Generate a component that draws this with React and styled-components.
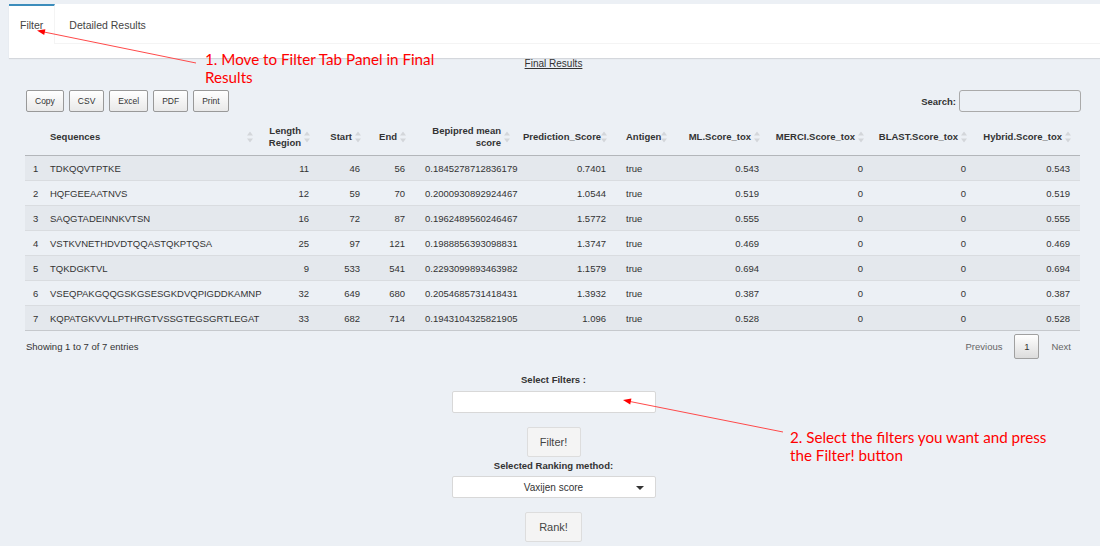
import React from 'react'
import styled, { createGlobalStyle } from 'styled-components'

const Global = createGlobalStyle`
  html, body {
    margin: 0;
    padding: 0;
    background: #ecf0f5;
    font-family: "Liberation Sans", Arial, sans-serif;
    color: #333;
  }
`

const Page = styled.div`
  position: relative;
  width: 1100px;
  height: 546px;
  overflow: hidden;
  background: #ecf0f5;
  padding-top: 4px;
  box-sizing: border-box;
`

const TabBox = styled.div`
  margin-left: 9px;
  height: 54px;
  background: #fff;
  box-shadow: 0 1px 1px rgba(0, 0, 0, 0.1);
`

const TabNav = styled.div`
  display: flex;
  height: 40px;
  border-bottom: 1px solid #f4f4f4;
  box-sizing: border-box;
`

const Tab = styled.div`
  display: flex;
  align-items: center;
  font-size: 10.5px;
  color: #444;
  box-sizing: border-box;
  border-top: 2px solid ${p => (p.$active ? '#3c8dbc' : 'transparent')};
  border-right: ${p => (p.$active ? '1px solid #f4f4f4' : 'none')};
  margin-bottom: ${p => (p.$active ? '-1px' : '0')};
  background: #fff;
  padding: 0 11px 0 ${p => (p.$active ? '11px' : '14px')};
`

const Content = styled.div`
  padding: 0 20px 0 25px;
`

const Title = styled.div`
  text-align: center;
  font-size: 10px;
  line-height: 12px;
  text-decoration: underline;
  color: #333;
  padding-left: 2px;
`

const Toolbar = styled.div`
  display: flex;
  align-items: center;
  justify-content: space-between;
  margin-top: 20px;
  margin-left: 1px;
`

const ButtonGroup = styled.div`
  display: flex;
  gap: 5px;
`

const ExportButton = styled.button`
  height: 22px;
  padding: 0 8px;
  font-family: inherit;
  font-size: 8.5px;
  color: #333;
  background: linear-gradient(to bottom, #fff 0%, #e9e9e9 100%);
  border: 1px solid #999;
  border-radius: 2px;
  box-sizing: border-box;
`

const SearchLabel = styled.label`
  display: flex;
  align-items: center;
  gap: 3px;
  font-size: 9.5px;
  font-weight: bold;
  margin-right: -1px;
`

const SearchInput = styled.input`
  width: 122px;
  height: 22px;
  box-sizing: border-box;
  border: 1px solid #aaa;
  border-radius: 3px;
  background: transparent;
`

const Table = styled.table`
  margin-top: 6px;
  width: 1055px;
  table-layout: fixed;
  border-collapse: collapse;
  font-size: 9.5px;
  border-bottom: 1px solid #c6c9cd;
`

const Th = styled.th`
  position: relative;
  height: 37px;
  padding: 0 ${p => (p.$right ? '18px' : '18px')} 0 ${p => (p.$right ? '4px' : '10px')};
  text-align: ${p => (p.$right ? 'right' : 'left')};
  font-weight: bold;
  line-height: 12px;
  vertical-align: middle;
  border-bottom: 1px solid #b3b6ba;
  color: #333;
`

const Td = styled.td`
  height: 24px;
  padding: 0 ${p => (p.$index ? '0' : '10px')} 0 ${p => (p.$index ? '8px' : '10px')};
  text-align: ${p => (p.$right ? 'right' : 'left')};
  white-space: nowrap;
  overflow: hidden;
  border-top: 1px solid #d9dce0;
  color: #333;
`

const Tr = styled.tr`
  background: ${p => (p.$odd ? '#e4e8ed' : 'transparent')};
`

const SortWrap = styled.span`
  position: absolute;
  right: 9px;
  top: 50%;
  transform: translateY(-50%);
  display: flex;
`

const Footer = styled.div`
  display: flex;
  align-items: center;
  justify-content: space-between;
  margin-top: 3px;
  height: 25px;
  font-size: 9.5px;
  margin-left: 1px;
`

const Pager = styled.div`
  display: flex;
  align-items: center;
  gap: 12px;
  color: #666;
  margin-right: 9px;
`

const PageBtn = styled.span`
  width: 25px;
  height: 25px;
  display: flex;
  align-items: center;
  justify-content: center;
  color: #333;
  border: 1px solid #a0a0a0;
  border-radius: 2px;
  box-sizing: border-box;
  background: linear-gradient(to bottom, #fff 0%, #dcdcdc 100%);
`

const Form = styled.div`
  display: flex;
  flex-direction: column;
  align-items: center;
  margin-top: 15px;
  padding-left: 2px;
`

const FieldLabel = styled.div`
  font-size: 9.5px;
  font-weight: bold;
  line-height: 11px;
  margin-top: ${p => p.$mt || 0}px;
  color: #333;
`

const Field = styled.div`
  position: relative;
  width: 204px;
  height: 22px;
  margin-top: ${p => p.$mt || 0}px;
  box-sizing: border-box;
  background: #fff;
  border: 1px solid #d8d8d8;
  border-radius: 2px;
  display: flex;
  align-items: center;
  justify-content: center;
  font-size: 10px;
  color: #333;
`

const Caret = styled.span`
  position: absolute;
  right: 11px;
  top: 9px;
  width: 0;
  height: 0;
  border-left: 4px solid transparent;
  border-right: 4px solid transparent;
  border-top: 4px solid #333;
`

const ActionButton = styled.button`
  width: ${p => p.$w}px;
  height: 30px;
  margin-top: ${p => p.$mt}px;
  font-family: inherit;
  font-size: 11px;
  color: #444;
  background: #f4f4f4;
  border: 1px solid #ddd;
  border-radius: 2px;
  box-sizing: border-box;
`

const Note = styled.div`
  position: absolute;
  left: ${p => p.$x}px;
  top: ${p => p.$y}px;
  font-family: Lato, "Open Sans", sans-serif;
  font-size: 15.2px;
  line-height: 18px;
  color: #ff0000;
  width: ${p => p.$w}px;
`

const Overlay = styled.svg`
  position: absolute;
  left: 0;
  top: 0;
  pointer-events: none;
`

const SortIcon = () => (
  <SortWrap>
    <svg width="6" height="11" viewBox="0 0 6 11">
      <polygon points="3,0 6,4 0,4" fill="#d3d6da" />
      <polygon points="0,7 6,7 3,11" fill="#d3d6da" />
    </svg>
  </SortWrap>
)

const columns = [
  { w: 15, label: '' },
  { w: 222, label: 'Sequences' },
  { w: 57, label: ['Length', 'Region'], right: true },
  { w: 51, label: 'Start', right: true },
  { w: 45, label: 'End', right: true },
  { w: 104, label: ['Bepipred mean', 'score'], right: true },
  { w: 97, label: 'Prediction_Score', right: true },
  { w: 60, label: 'Antigen' },
  { w: 93, label: 'ML.Score_tox', right: true },
  { w: 104, label: 'MERCI.Score_tox', right: true },
  { w: 103, label: 'BLAST.Score_tox', right: true },
  { w: 104, label: 'Hybrid.Score_tox', right: true },
]

const rows = [
  ['TDKQQVTPTKE', 11, 46, 56, '0.1845278712836179', '0.7401', 'true', '0.543', 0, 0, '0.543'],
  ['HQFGEEAATNVS', 12, 59, 70, '0.2000930892924467', '1.0544', 'true', '0.519', 0, 0, '0.519'],
  ['SAQGTADEINNKVTSN', 16, 72, 87, '0.1962489560246467', '1.5772', 'true', '0.555', 0, 0, '0.555'],
  ['VSTKVNETHDVDTQQASTQKPTQSA', 25, 97, 121, '0.1988856393098831', '1.3747', 'true', '0.469', 0, 0, '0.469'],
  ['TQKDGKTVL', 9, 533, 541, '0.2293099893463982', '1.1579', 'true', '0.694', 0, 0, '0.694'],
  ['VSEQPAKGQQGSKGSESGKDVQPIGDDKAMNP', 32, 649, 680, '0.2054685731418431', '1.3932', 'true', '0.387', 0, 0, '0.387'],
  ['KQPATGKVVLLPTHRGTVSSGTEGSGRTLEGAT', 33, 682, 714, '0.1943104325821905', '1.096', 'true', '0.528', 0, 0, '0.528'],
]

export default function App() {
  return (
    <Page>
      <Global />
      <TabBox>
        <TabNav>
          <Tab $active>Filter</Tab>
          <Tab>Detailed Results</Tab>
        </TabNav>
      </TabBox>

      <Content>
        <Title>Final Results</Title>

        <Toolbar>
          <ButtonGroup>
            {['Copy', 'CSV', 'Excel', 'PDF', 'Print'].map(b => (
              <ExportButton key={b}>{b}</ExportButton>
            ))}
          </ButtonGroup>
          <SearchLabel>
            Search:
            <SearchInput />
          </SearchLabel>
        </Toolbar>

        <Table>
          <colgroup>
            {columns.map((c, i) => (
              <col key={i} style={{ width: c.w }} />
            ))}
          </colgroup>
          <thead>
            <tr>
              {columns.map((c, i) => (
                <Th key={i} $right={c.right}>
                  {Array.isArray(c.label) ? (
                    <>
                      {c.label[0]}
                      <br />
                      {c.label[1]}
                    </>
                  ) : (
                    c.label
                  )}
                  {i > 0 && <SortIcon />}
                </Th>
              ))}
            </tr>
          </thead>
          <tbody>
            {rows.map((r, i) => (
              <Tr key={i} $odd={i % 2 === 0}>
                <Td $index>{i + 1}</Td>
                {r.map((v, j) => (
                  <Td key={j} $right={columns[j + 1].right}>
                    {v}
                  </Td>
                ))}
              </Tr>
            ))}
          </tbody>
        </Table>

        <Footer>
          <span>Showing 1 to 7 of 7 entries</span>
          <Pager>
            <span>Previous</span>
            <PageBtn>1</PageBtn>
            <span>Next</span>
          </Pager>
        </Footer>

        <Form>
          <FieldLabel>Select Filters :</FieldLabel>
          <Field $mt={6} />
          <ActionButton $w={54} $mt={14}>Filter!</ActionButton>
          <FieldLabel $mt={3}>Selected Ranking method:</FieldLabel>
          <Field $mt={5}>
            Vaxijen score
            <Caret />
          </Field>
          <ActionButton $w={57} $mt={14}>Rank!</ActionButton>
        </Form>
      </Content>

      <Note $x={205} $y={50} $w={240}>
        1. Move to Filter Tab Panel in Final Results
      </Note>
      <Note $x={790} $y={428} $w={262}>
        2. Select the filters you want and press the Filter! button
      </Note>

      <Overlay width="1100" height="546" viewBox="0 0 1100 546">
        <line x1="196" y1="63" x2="44" y2="32" stroke="#ff4a4a" strokeWidth="1" />
        <polygon points="37,30.5 45.4,29.2 44.2,35" fill="#ff0000" />
        <line x1="783" y1="432" x2="630" y2="401.5" stroke="#ff4a4a" strokeWidth="1" />
        <polygon points="623,400 631.4,398.6 630.2,404.5" fill="#ff0000" />
      </Overlay>
    </Page>
  )
}
